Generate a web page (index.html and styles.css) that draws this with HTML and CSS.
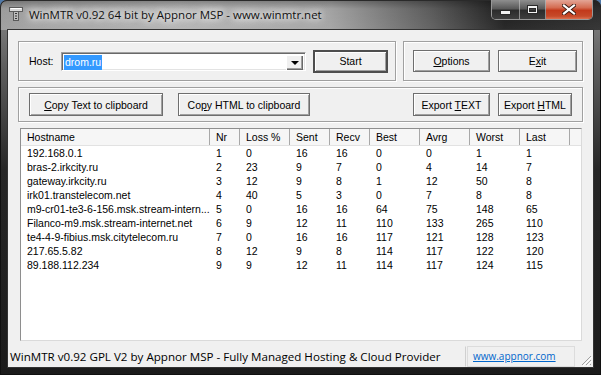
FILE: index.html
```html
<!DOCTYPE html>
<html lang="en">
<head>
    <meta charset="UTF-8">
    <meta name="viewport" content="width=device-width, initial-scale=1.0">
    <title>WinMTR</title>
    <link rel="stylesheet" href="styles.css">
</head>
<body>
    <div class="window">
        <div class="titlebar">
            <svg class="app-icon" width="14" height="14" viewBox="0 0 14 14">
                <rect x="0.5" y="0.5" width="13" height="4" fill="#d8d8d8" stroke="#5a5a5a"/>
                <rect x="4.5" y="4.5" width="5" height="9" fill="#bdbdbd" stroke="#5a5a5a"/>
                <path d="M6 6.5h2M6 9h2M6 11.5h2" stroke="#333" stroke-width="1"/>
                <path d="M1.5 1.5h11" stroke="#fff" stroke-width="1"/>
            </svg>
            <span class="title">WinMTR v0.92 64 bit by Appnor MSP - www.winmtr.net</span>
            <div class="caption">
                <div class="cap-btn cap-min"><span class="glyph-min"></span></div>
                <div class="cap-btn cap-max"><span class="glyph-max"></span></div>
                <div class="cap-btn cap-close">
                    <svg width="14" height="11" viewBox="0 0 14 11">
                        <path d="M2 1.5l10 8M12 1.5l-10 8" stroke="#3a1a12" stroke-width="4" stroke-linecap="square"/>
                        <path d="M2 1.5l10 8M12 1.5l-10 8" stroke="#fff" stroke-width="2.2" stroke-linecap="square"/>
                    </svg>
                </div>
            </div>
        </div>

        <div class="client">
            <div class="main">
                <div class="top-row">
                    <div class="group host-group">
                        <span class="host-label">Host:</span>
                        <div class="combo">
                            <span class="combo-text"><span class="selected">drom.ru</span></span>
                            <span class="combo-drop"><span class="arrow"></span></span>
                        </div>
                        <button class="btn btn-default start-btn">Start</button>
                    </div>
                    <div class="group opt-group">
                        <button class="btn options-btn"><u>O</u>ptions</button>
                        <button class="btn exit-btn">E<u>x</u>it</button>
                    </div>
                </div>

                <div class="group tools-group">
                    <button class="btn copy-text-btn"><u>C</u>opy Text to clipboard</button>
                    <button class="btn copy-html-btn">Co<u>p</u>y HTML to clipboard</button>
                    <span class="spacer"></span>
                    <button class="btn export-text-btn">Export <u>T</u>EXT</button>
                    <button class="btn export-html-btn">Export <u>H</u>TML</button>
                </div>

                <div class="list">
                    <div class="list-row list-header">
                        <div>Hostname</div><div>Nr</div><div>Loss %</div><div>Sent</div><div>Recv</div>
                        <div>Best</div><div>Avrg</div><div>Worst</div><div>Last</div><div></div>
                    </div>
                    <div class="list-row">
                        <div>192.168.0.1</div><div>1</div><div>0</div><div>16</div><div>16</div>
                        <div>0</div><div>0</div><div>1</div><div>1</div>
                    </div>
                    <div class="list-row">
                        <div>bras-2.irkcity.ru</div><div>2</div><div>23</div><div>9</div><div>7</div>
                        <div>0</div><div>4</div><div>14</div><div>7</div>
                    </div>
                    <div class="list-row">
                        <div>gateway.irkcity.ru</div><div>3</div><div>12</div><div>9</div><div>8</div>
                        <div>1</div><div>12</div><div>50</div><div>8</div>
                    </div>
                    <div class="list-row">
                        <div>irk01.transtelecom.net</div><div>4</div><div>40</div><div>5</div><div>3</div>
                        <div>0</div><div>7</div><div>8</div><div>8</div>
                    </div>
                    <div class="list-row">
                        <div>m9-cr01-te3-6-156.msk.stream-intern...</div><div>5</div><div>0</div><div>16</div><div>16</div>
                        <div>64</div><div>75</div><div>148</div><div>65</div>
                    </div>
                    <div class="list-row">
                        <div>Filanco-m9.msk.stream-internet.net</div><div>6</div><div>9</div><div>12</div><div>11</div>
                        <div>110</div><div>133</div><div>265</div><div>110</div>
                    </div>
                    <div class="list-row">
                        <div>te4-4-9-fibius.msk.citytelecom.ru</div><div>7</div><div>0</div><div>16</div><div>16</div>
                        <div>117</div><div>121</div><div>128</div><div>123</div>
                    </div>
                    <div class="list-row">
                        <div>217.65.5.82</div><div>8</div><div>12</div><div>9</div><div>8</div>
                        <div>114</div><div>117</div><div>122</div><div>120</div>
                    </div>
                    <div class="list-row">
                        <div>89.188.112.234</div><div>9</div><div>9</div><div>12</div><div>11</div>
                        <div>114</div><div>117</div><div>124</div><div>115</div>
                    </div>
                </div>
            </div>

            <div class="statusbar">
                <div class="status-panel status-main">WinMTR v0.92 GPL V2 by Appnor MSP - Fully Managed Hosting &amp; Cloud Provider</div>
                <div class="status-panel status-link"><a href="#">www.appnor.com</a></div>
                <div class="grip">
                    <svg width="12" height="12" viewBox="0 0 12 12">
                        <path d="M11 2L2 11M11 6L6 11M11 10L10 11" stroke="#a0a0a0" stroke-width="1"/>
                        <path d="M12 3L3 12M12 7L7 12" stroke="#fff" stroke-width="1"/>
                    </svg>
                </div>
            </div>
        </div>
    </div>
</body>
</html>
```

FILE: styles.css
```css
body {
    margin: 0;
    background-color: #4f78a8;
    font-family: "Liberation Sans", Arial, sans-serif;
    font-size: 10.5px;
    color: #000;
}

/* window frame */
.window {
    width: 601px;
    height: 375px;
    display: flex;
    flex-direction: column;
    border-radius: 7px 7px 0 0;
    overflow: hidden;
    background: linear-gradient(180deg, #8a8a8a 0px, #5c5c5c 70px, #262626 170px, #1b1b1b 100%);
    box-shadow: inset 0 0 0 1px #101010;
}
.titlebar {
    height: 30px;
    flex-shrink: 0;
    display: flex;
    align-items: flex-start;
    padding: 0 8px 0 9px;
    background:
        linear-gradient(180deg, rgba(0, 0, 0, 0.28) 0px, rgba(0, 0, 0, 0) 9px, rgba(255, 255, 255, 0.06) 100%),
        linear-gradient(90deg, #9c9c9c 0%, #b2b2b2 30%, #a2a2a2 55%, #5a5a5a 72%, #1e1e1e 84%, #2c2c2c 100%);
    border-radius: 7px 7px 0 0;
    box-shadow: inset 0 1px 0 #2a2a2a, inset 1px 0 0 #2a2a2a, inset -1px 0 0 #2a2a2a;
}
.app-icon {
    margin-top: 7px;
    flex-shrink: 0;
}
.title {
    margin: 7px 0 0 6px;
    font-family: "Open Sans", "Noto Sans", sans-serif;
    font-size: 11.5px;
    line-height: 15px;
    color: #111;
    text-shadow: 0 0 6px #fff, 0 0 10px #fff, 0 0 14px rgba(255, 255, 255, 0.8);
    white-space: nowrap;
}
.caption {
    margin-left: auto;
    display: flex;
    height: 19px;
    border: 1px solid rgba(200, 200, 200, 0.7);
    border-top: none;
    border-radius: 0 0 5px 5px;
    overflow: hidden;
}
.cap-btn {
    display: flex;
    align-items: center;
    justify-content: center;
    box-sizing: border-box;
}
.cap-min, .cap-max {
    background: linear-gradient(180deg, #8e8e8e 0%, #5a5a5a 45%, #2c2c2c 55%, #3e3e3e 100%);
    border-right: 1px solid rgba(200, 200, 200, 0.6);
}
.cap-min {
    width: 28px;
}
.cap-max {
    width: 26px;
}
.cap-close {
    width: 46px;
    background: linear-gradient(180deg, #e3a596 0%, #d46c52 40%, #c2391b 55%, #c64a2a 85%, #dc7050 100%);
}
.glyph-min {
    width: 9px;
    height: 3px;
    margin-top: 5px;
    background: #f2f2f2;
    box-shadow: 0 0 0 1px #2a2a2a;
}
.glyph-max {
    width: 7px;
    height: 4px;
    border: 1px solid #f2f2f2;
    border-top-width: 2px;
    box-shadow: 0 0 0 1px #2a2a2a, inset 0 0 0 1px #2a2a2a;
}

/* client area */
.client {
    flex: 1;
    margin: 0 8px 8px;
    display: flex;
    flex-direction: column;
    background-color: #f0f0f0;
    box-shadow: 0 0 0 1px #333;
}
.main {
    flex: 1;
    display: flex;
    flex-direction: column;
    padding: 11px 10px 5px;
}
.group {
    box-sizing: border-box;
    border: 1px solid #a0a0a0;
    box-shadow: inset 1px 1px 0 #fff, 1px 1px 0 #fff;
    display: flex;
    align-items: center;
}
.top-row {
    display: flex;
    gap: 7px;
    height: 40px;
}
.host-group {
    width: 378px;
    padding: 0 7px 0 10px;
}
.host-label {
    width: 32px;
}
.combo {
    width: 245px;
    height: 19px;
    box-sizing: border-box;
    display: flex;
    padding: 2px;
    background: #fff;
    border: 1px solid;
    border-color: #a0a0a0 #fff #fff #a0a0a0;
    box-shadow: inset 1px 1px 0 #696969, inset -1px -1px 0 #e3e3e3;
}
.combo-text {
    flex: 1;
    line-height: 15px;
}
.selected {
    background-color: #3399ff;
    color: #fff;
    padding: 0 1px;
    display: inline-block;
}
.combo-drop {
    width: 17px;
    height: 15px;
    box-sizing: border-box;
    display: flex;
    align-items: center;
    justify-content: center;
    background: #f0f0f0;
    box-shadow: inset 1px 1px 0 #fff, inset -1px -1px 0 #696969, inset -2px -2px 0 #a0a0a0;
}
.arrow {
    width: 0;
    height: 0;
    border-left: 4px solid transparent;
    border-right: 4px solid transparent;
    border-top: 4px solid #000;
    margin-top: 1px;
}
.btn {
    font: inherit;
    color: #000;
    background-color: #f0f0f0;
    border: 1px solid #6e6e6e;
    box-shadow: inset 1px 1px 0 #fff, inset -1px -1px 0 #a0a0a0;
    padding: 0;
    height: 23px;
    box-sizing: border-box;
}
.btn-default {
    border: 2px solid #4e4e4e;
}
.start-btn {
    width: 75px;
    margin-left: 7px;
}
.opt-group {
    width: 180px;
    padding: 0 0 0 9px;
    gap: 8px;
}
.options-btn {
    width: 77px;
    height: 22px;
}
.exit-btn {
    width: 79px;
    height: 22px;
}
.tools-group {
    margin-top: 6px;
    height: 35px;
    padding: 0 10px;
}
.copy-text-btn {
    width: 134px;
}
.copy-html-btn {
    width: 132px;
    margin-left: 15px;
}
.spacer {
    flex: 1;
}
.export-text-btn {
    width: 77px;
    margin-right: 8px;
}
.export-html-btn {
    width: 74px;
}

/* hop list */
.list {
    margin: 6px 1px 0 2px;
    flex: 1;
    background: #fff;
    border: 1px solid;
    border-color: #8e8e8e #dadada #dadada #8e8e8e;
}
.list-row {
    display: grid;
    grid-template-columns: 189px 30px 50px 40px 40px 50px 50px 50px 50px 1fr;
    height: 14px;
    line-height: 14px;
}
.list-row > div {
    padding-left: 6px;
    white-space: nowrap;
    overflow: hidden;
}
.list-header {
    height: 16px;
    line-height: 16px;
    background-color: #f6f6f6;
    border-bottom: 1px solid #e2e2e2;
}
.list-header > div {
    border-right: 1px solid #a8a8a8;
}
.list-header > div:last-child {
    border-right: none;
}

/* status bar */
.statusbar {
    height: 21px;
    flex-shrink: 0;
    display: flex;
    font-family: "Open Sans", "Noto Sans", sans-serif;
    font-size: 11.6px;
    line-height: 19px;
}
.status-panel {
    box-sizing: border-box;
    border: 1px solid;
    border-color: #f0f0f0 #d0d0d0 #f0f0f0 #f0f0f0;
    white-space: nowrap;
    overflow: hidden;
}
.status-main {
    width: 458px;
    padding-left: 1px;
}
.status-link {
    width: 108px;
    margin-left: 1px;
    padding-left: 5px;
    border-color: #dcdcdc;
    font-size: 10px;
}
.status-link a {
    color: #0066cc;
}
.grip {
    flex: 1;
    display: flex;
    align-items: flex-end;
    justify-content: flex-end;
    padding: 0 1px 1px 0;
}
```
